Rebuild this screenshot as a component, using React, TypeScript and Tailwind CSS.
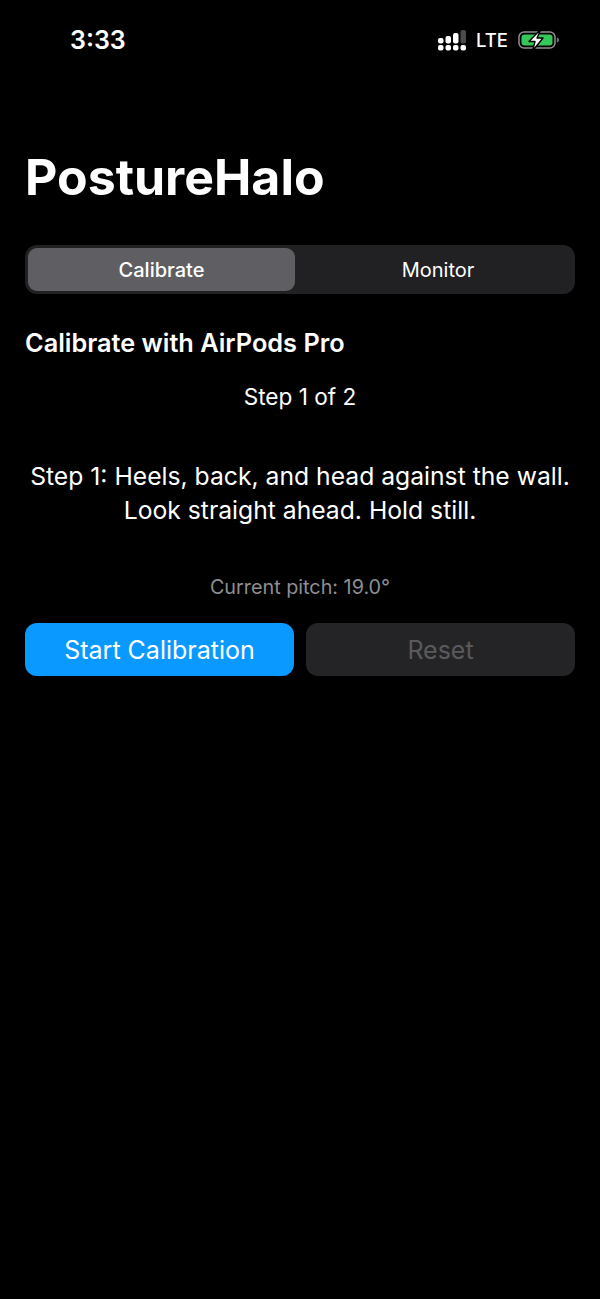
const FONT = "font-['Inter','Liberation_Sans',sans-serif]";

const SignalIcon = () => (
  <svg width="31" height="21" viewBox="0 0 31 21" className="fill-white">
    <rect x="1" y="8" width="5.5" height="5.5" rx="2" />
    <rect x="1" y="15" width="5.5" height="5.5" rx="2" />
    <rect x="8.5" y="6" width="5.5" height="7.5" rx="2" />
    <rect x="8.5" y="15" width="5.5" height="5.5" rx="2" />
    <rect x="16" y="3" width="5.5" height="10.5" rx="2" />
    <rect x="16" y="15" width="5.5" height="5.5" rx="2" />
    <rect x="23.5" y="0" width="5.5" height="13.5" rx="2" fill="#4a4a4a" />
    <rect x="23.5" y="15" width="5.5" height="5.5" rx="2" />
  </svg>
);

const BatteryIcon = () => (
  <svg width="42" height="24" viewBox="0 0 42 24">
    <rect x="1" y="4" width="36" height="16" rx="5" fill="none" stroke="#8e8e8e" strokeWidth="1.5" />
    <rect x="3.5" y="6.5" width="31" height="11" rx="3" fill="#34c759" />
    <path d="M38.8 9.5c1.6.5 2.4 1.4 2.4 2.5s-.8 2-2.4 2.5z" fill="#707070" />
    <path d="M23 1 11 13.5h6l-2.5 9.5 10.5-13h-6z" fill="#fff" stroke="#000" strokeWidth="1.4" strokeLinejoin="round" />
  </svg>
);

export default function App() {
  return (
    <div className={`flex h-[1299px] w-[600px] flex-col overflow-hidden bg-black text-white ${FONT}`}>
      <div className="flex h-[82px] items-start justify-between pl-[70px] pr-[40px] pt-[25px]">
        <span className="text-[25px] font-semibold leading-[30px]">3:33</span>
        <div className="flex items-center pt-[3px]">
          <SignalIcon />
          <span className="ml-[8px] mr-[10px] text-[18.5px] font-medium leading-[24px]">LTE</span>
          <BatteryIcon />
        </div>
      </div>

      <main className="flex flex-col px-[25px]">
        <h1 className="mt-[65px] text-[50px] font-bold leading-[60px]">PostureHalo</h1>

        <div className="mt-[38px] flex h-[49px] rounded-[12px] bg-[#212124] p-[3px]">
          <div className="flex w-[267px] items-center justify-center rounded-[9px] bg-[#5f5f63] text-[20px] font-medium">
            Calibrate
          </div>
          <div className="flex flex-1 items-center justify-center pl-[9px] text-[20px]">Monitor</div>
        </div>

        <h2 className="mt-[32px] text-[25.3px] font-semibold leading-[34px]">Calibrate with AirPods Pro</h2>
        <p className="mt-[23px] text-center text-[22.6px] leading-[28px]">Step 1 of 2</p>
        <p className="mt-[48px] text-center text-[24.7px] leading-[34px]">
          Step 1: Heels, back, and head against the wall.
          <br />
          Look straight ahead. Hold still.
        </p>
        <p className="mt-[48px] text-center text-[19.8px] leading-[24px] text-[#8e8e93]">Current pitch: 19.0°</p>

        <div className="mt-[24px] flex gap-[12px]">
          <button className="flex h-[53px] flex-1 items-center justify-center rounded-[12px] bg-[#0a99ff] pt-[2px] text-[25px]">
            Start Calibration
          </button>
          <button className="flex h-[53px] flex-1 items-center justify-center rounded-[12px] bg-[#242426] pt-[2px] text-[25px] text-[#5a5a5c]">
            Reset
          </button>
        </div>
      </main>
    </div>
  );
}
